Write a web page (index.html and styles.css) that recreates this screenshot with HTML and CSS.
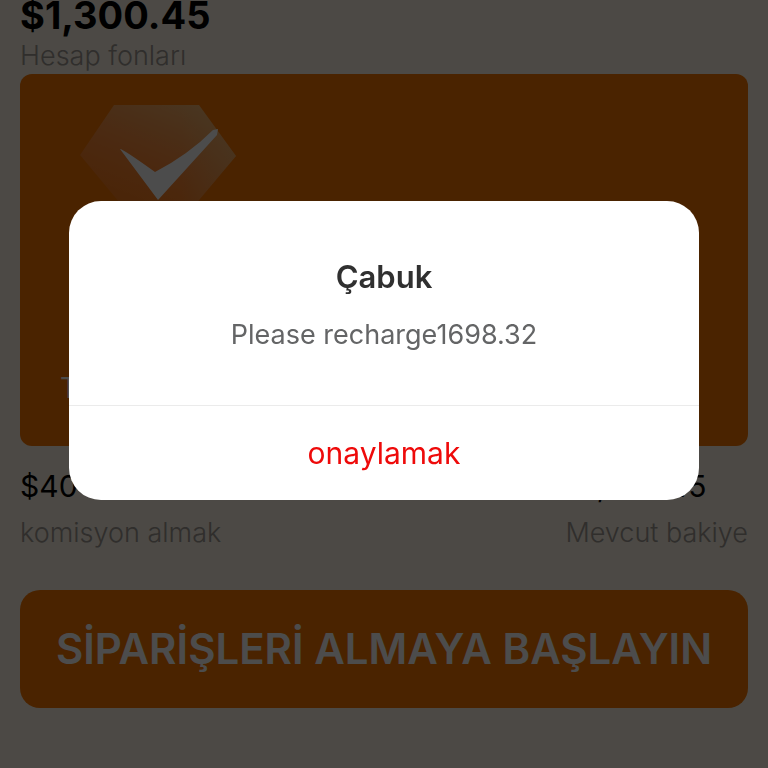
FILE: index.html
```html
<!DOCTYPE html>
<html lang="tr">
<head>
<meta charset="utf-8">
<meta name="viewport" content="width=device-width, initial-scale=1">
<title>Hesap</title>
<link rel="stylesheet" href="styles.css">
</head>
<body>
<main class="page">
  <section class="account">
    <strong class="balance">$1,300.45</strong>
    <span class="label">Hesap fonları</span>
  </section>
  <section class="card">
    <svg class="badge" viewBox="0 0 156 144" aria-hidden="true">
      <defs>
        <linearGradient id="gem" x1="0.75" y1="0" x2="0.4" y2="0.8">
          <stop offset="0" stop-color="#f4dcb4" stop-opacity="0.6"/>
          <stop offset="0.5" stop-color="#ffa884" stop-opacity="0.45"/>
          <stop offset="1" stop-color="#ff8a60" stop-opacity="0.25"/>
        </linearGradient>
        <linearGradient id="edge" x1="0" y1="0" x2="1" y2="0">
          <stop offset="0.65" stop-color="#e8c080" stop-opacity="0"/>
          <stop offset="1" stop-color="#e8c080" stop-opacity="0.4"/>
        </linearGradient>
      </defs>
      <path d="M34 0H119L156 51L78 144L0 50Z" fill="url(#gem)"/>
      <path d="M34 0H119L156 51L78 144L0 50Z" fill="url(#edge)"/>
      <path d="M40 44Q43 44 75 67Q108 50 133 25L138 24L137 30L78 95Z" fill="#fff"/>
    </svg>
    <p class="card-text">T</p>
  </section>
  <section class="stats">
    <div class="stat">
      <span class="value">$40</span>
      <span class="label">komisyon almak</span>
    </div>
    <div class="stat">
      <span class="value">$1,300.45</span>
      <span class="label">Mevcut bakiye</span>
    </div>
  </section>
  <button class="start" type="button">SİPARİŞLERİ ALMAYA BAŞLAYIN</button>
</main>
<div class="overlay">
  <div class="dialog" role="dialog" aria-modal="true" aria-labelledby="dialog-title">
    <div class="dialog-body">
      <h1 class="dialog-title" id="dialog-title">Çabuk</h1>
      <p class="dialog-message">Please recharge1698.32</p>
    </div>
    <button class="confirm" type="button">onaylamak</button>
  </div>
</div>
</body>
</html>
```
FILE: styles.css
```css
* {
  box-sizing: border-box;
}

body {
  margin: 0;
  background: #fdf5e6;
  color: #000;
  font-family: Inter, "Liberation Sans", sans-serif;
  overflow: hidden;
}

h1,
p {
  margin: 0;
}

button {
  border: 0;
  font-family: inherit;
  cursor: pointer;
}

.page {
  display: flex;
  flex-direction: column;
  min-height: 100vh;
  padding: 0 20px;
}

.account {
  display: flex;
  flex-direction: column;
  padding-bottom: 1px;
}

.balance {
  font-size: 38px;
  line-height: 30px;
  padding-bottom: 9px;
}

.label {
  color: #a09a94;
  font-size: 27px;
  font-weight: 300;
  line-height: 34px;
}

.card {
  display: flex;
  flex-direction: column;
  justify-content: space-between;
  min-height: 372px;
  padding: 31px 40px 40px 60px;
  border-radius: 12px;
  background: #f77500;
}

.badge {
  width: 156px;
  height: 144px;
}

.card-text {
  margin-left: -20px;
  color: #fff;
  font-size: 28px;
  line-height: 36px;
}

.stats {
  display: flex;
  justify-content: space-between;
  padding-top: 20px;
}

.stat {
  display: flex;
  flex-direction: column;
  gap: 10px;
}

.value {
  font-size: 30px;
  line-height: 40px;
}

.start {
  margin-top: 40px;
  padding: 32px 0;
  border-radius: 20px;
  background: #f77500;
  color: #fff;
  font-size: 42px;
  font-weight: 600;
  line-height: 54px;
  white-space: nowrap;
}

.overlay {
  position: fixed;
  inset: 0;
  display: flex;
  align-items: center;
  justify-content: center;
  padding-bottom: 67px;
  background: rgba(0, 0, 0, 0.7);
}

.dialog {
  width: 82%;
  border-radius: 32px;
  background: #fff;
  overflow: hidden;
  text-align: center;
}

.dialog-body {
  padding: 52px 32px;
  border-bottom: 1px solid #ebebeb;
}

.dialog-title {
  color: #303030;
  font-size: 31px;
  font-weight: 600;
  line-height: 48px;
}

.dialog-message {
  margin-top: 16px;
  color: #646566;
  font-size: 27px;
  line-height: 36px;
}

.confirm {
  display: block;
  width: 100%;
  padding: 27px 0;
  background: none;
  color: #ee0a0a;
  font-size: 30px;
  line-height: 40px;
}
```
